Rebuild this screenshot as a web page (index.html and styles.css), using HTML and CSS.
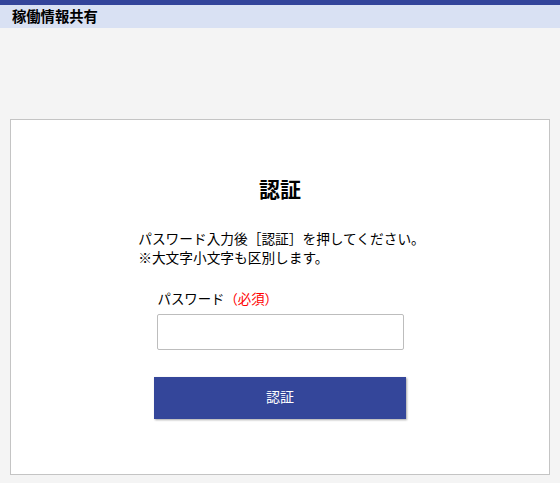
FILE: index.html
```html
<!DOCTYPE html>
<html lang="ja">
<head>
<meta charset="utf-8">
<title>稼働情報共有</title>
<link rel="stylesheet" href="styles.css">
</head>
<body>
<header class="app-header">稼働情報共有</header>
<main class="page">
  <section class="card">
    <h1 class="card-title">認証</h1>
    <p class="lead">パスワード入力後［認証］を押してください。<br>※大文字小文字も区別します。</p>
    <div class="field">
      <label class="field-label" for="pw">パスワード<span class="required">（必須）</span></label>
      <input class="field-input" id="pw" type="password">
    </div>
    <button class="submit" type="button">認証</button>
  </section>
</main>
</body>
</html>
```
FILE: styles.css
```css
html, body {
  margin: 0;
  padding: 0;
}
body {
  background: #f4f4f4;
  font-family: "Noto Sans CJK JP", "Noto Sans", sans-serif;
  color: #000;
  font-size: 14px;
}
.app-header {
  border-top: 5px solid #33449a;
  background: #d9e1f3;
  height: 23px;
  line-height: 22px;
  padding-left: 12px;
  font-size: 14.3px;
  font-weight: bold;
}
.page {
  padding-top: 91px;
}
.card {
  box-sizing: border-box;
  width: 540px;
  height: 356px;
  margin: 0 auto;
  background: #fff;
  border: 1px solid #c4c4c4;
  display: flex;
  flex-direction: column;
  align-items: center;
  padding-top: 53px;
}
.card-title {
  margin: 0;
  font-size: 21px;
  line-height: 30px;
  font-weight: bold;
}
.lead {
  margin: 26px 0 0;
  line-height: 19px;
  font-size: 13.7px;
  white-space: nowrap;
  width: max-content;
  padding-left: 3px;
}
.field {
  margin-top: 21px;
  width: 247px;
  display: flex;
  flex-direction: column;
  gap: 6px;
}
.field-label {
  line-height: 20px;
  font-size: 13.4px;
  padding-left: 1px;
  white-space: nowrap;
}
.required {
  color: #f00;
}
.field-input {
  box-sizing: border-box;
  width: 247px;
  height: 36px;
  margin: 0;
  border: 1px solid #bdbdbd;
  border-radius: 2px;
  background: #fff;
  outline: none;
}
.submit {
  margin-top: 27px;
  width: 252px;
  height: 42px;
  border: none;
  background: #34469a;
  color: #fff;
  font-family: inherit;
  font-size: 14px;
  line-height: 20px;
  padding: 0 0 4px;
  box-shadow: 1px 1px 2px rgba(0, 0, 0, 0.35);
  cursor: pointer;
}
```
